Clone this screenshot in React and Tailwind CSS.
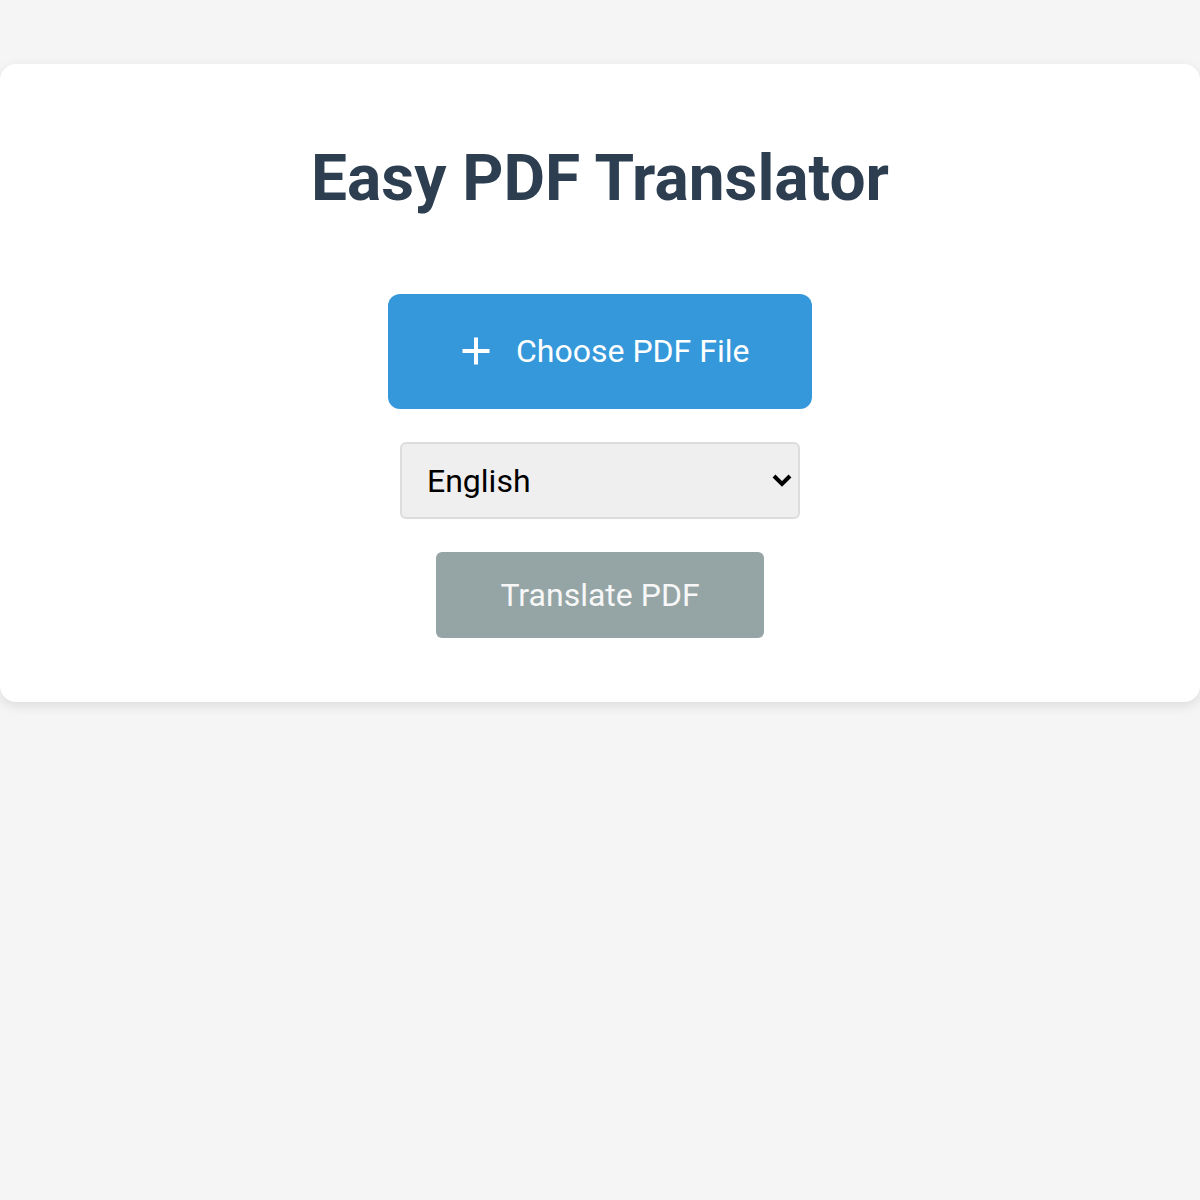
import { useState } from "react";

const App = () => {
  const [lang, setLang] = useState("en");

  return (
    <div className="min-h-screen bg-[#f5f5f5] pt-16" style={{ fontFamily: "Roboto, 'Liberation Sans', sans-serif" }}>
      {/* Card */}
      <div className="bg-white rounded-2xl shadow-[0_4px_12px_rgba(0,0,0,0.1)] pt-[77px] pb-16 flex flex-col items-center">
        <h1 className="text-[64px] leading-[75px] font-bold text-[#2c3e50]">
          Easy PDF Translator
        </h1>

        {/* Upload button */}
        <label className="mt-[78px] w-[424px] h-[115px] bg-[#3498db] rounded-xl flex items-center pl-[74px] pb-[2px] gap-[26px] text-white cursor-pointer">
          <svg width="28" height="28" viewBox="0 0 28 28" fill="none">
            <path d="M14 0.5v27M0.5 14h27" stroke="white" strokeWidth="4" />
          </svg>
          <span className="text-[32px] leading-none">Choose PDF File</span>
          <input type="file" accept="application/pdf" className="hidden" />
        </label>

        {/* Language select */}
        <div className="relative mt-[33px] w-[400px] h-[77px]">
          <select
            value={lang}
            onChange={(e) => setLang(e.target.value)}
            className="appearance-none w-full h-full bg-[#efefef] border-2 border-[#dcdcdc] rounded-md pl-[25px] text-[32px] text-black outline-none"
          >
            <option value="en">English</option>
            <option value="es">Spanish</option>
            <option value="fr">French</option>
            <option value="de">German</option>
          </select>
          <svg
            className="absolute right-[8px] top-[30px] pointer-events-none"
            width="20"
            height="16"
            viewBox="0 0 20 16"
            fill="none"
          >
            <path d="M2 4l8 8 8-8" stroke="black" strokeWidth="4" />
          </svg>
        </div>

        {/* Translate button */}
        <button
          disabled
          className="mt-[33px] w-[328px] h-[86px] bg-[#95a5a6] rounded-md text-[32px] text-[#f7f7f7]"
        >
          Translate PDF
        </button>
      </div>
    </div>
  );
};

export default App;
